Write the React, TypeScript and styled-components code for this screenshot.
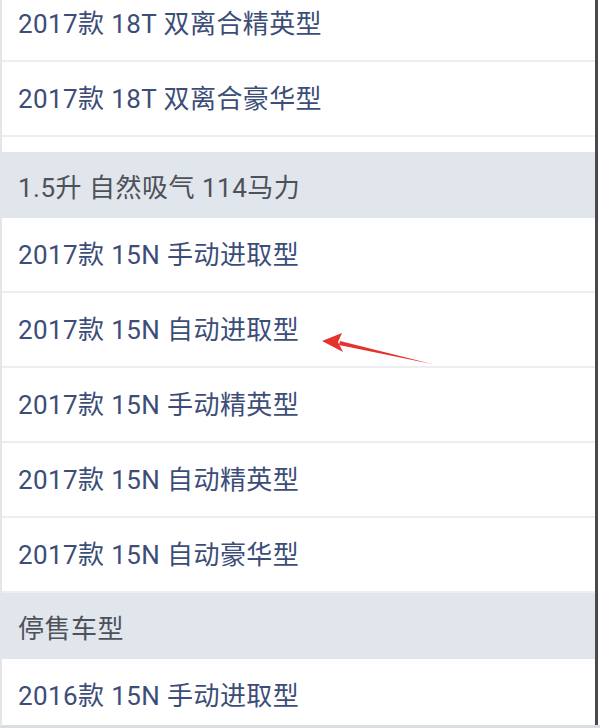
import React from "react";
import styled, { createGlobalStyle } from "styled-components";

const Global = createGlobalStyle`
  html, body { margin: 0; padding: 0; background: #ffffff; }
  body { overflow: hidden; }
`;

const Frame = styled.div`
  width: 600px;
  height: 728px;
  box-sizing: border-box;
  overflow: hidden;
  position: relative;
  background: #ffffff;
  border-left: 2px solid #e4e6e9;
  border-bottom: 3px solid #dcdde0;
  font-family: Roboto, "Noto Sans CJK SC", sans-serif;
`;

const Panel = styled.div`
  width: 596px;
  border-right: 3px solid #4a4a4c;
  box-sizing: border-box;
  margin-top: -13px;
  display: flex;
  flex-direction: column;
`;

const Section = styled.div<{ $gap?: boolean }>`
  display: flex;
  flex-direction: column;
  padding-bottom: ${(p) => (p.$gap ? "15px" : "0")};
`;

const Header = styled.div`
  height: 66px;
  background: #e1e5ec;
  display: flex;
  align-items: center;
  padding-left: 16px;
  font-size: 26px;
  letter-spacing: 0.5px;
  color: #4d5159;
`;

const Row = styled.div`
  height: 75px;
  box-sizing: border-box;
  display: flex;
  align-items: center;
  padding: 0 0 4px 16px;
  font-size: 26px;
  letter-spacing: 0.4px;
  color: #3c4d78;
  border-bottom: 2px solid #eceef1;
`;

const Arrow = styled.svg`
  position: absolute;
  left: 316px;
  top: 330px;
`;

const groups: { title?: string; rows: string[]; gap?: boolean }[] = [
  {
    rows: ["2017款 18T 双离合精英型", "2017款 18T 双离合豪华型"],
    gap: true,
  },
  {
    title: "1.5升 自然吸气 114马力",
    rows: [
      "2017款 15N 手动进取型",
      "2017款 15N 自动进取型",
      "2017款 15N 手动精英型",
      "2017款 15N 自动精英型",
      "2017款 15N 自动豪华型",
    ],
  },
  {
    title: "停售车型",
    rows: ["2016款 15N 手动进取型"],
  },
];

export default function App() {
  return (
    <>
      <Global />
      <Frame>
        <Panel>
          {groups.map((g, i) => (
            <Section key={i} $gap={g.gap}>
              {g.title && <Header>{g.title}</Header>}
              {g.rows.map((r) => (
                <Row key={r}>{r}</Row>
              ))}
            </Section>
          ))}
        </Panel>
        <Arrow width="124" height="40" viewBox="0 0 124 40">
          {/* pointer: thin tapering shaft ending in a solid head */}
          <path d="M114 34 L22 11 L21 15 Z" fill="#e5322d" />
          <path d="M4 11 L24 3 L20 12 L25 22 Z" fill="#e5322d" />
        </Arrow>
      </Frame>
    </>
  );
}
